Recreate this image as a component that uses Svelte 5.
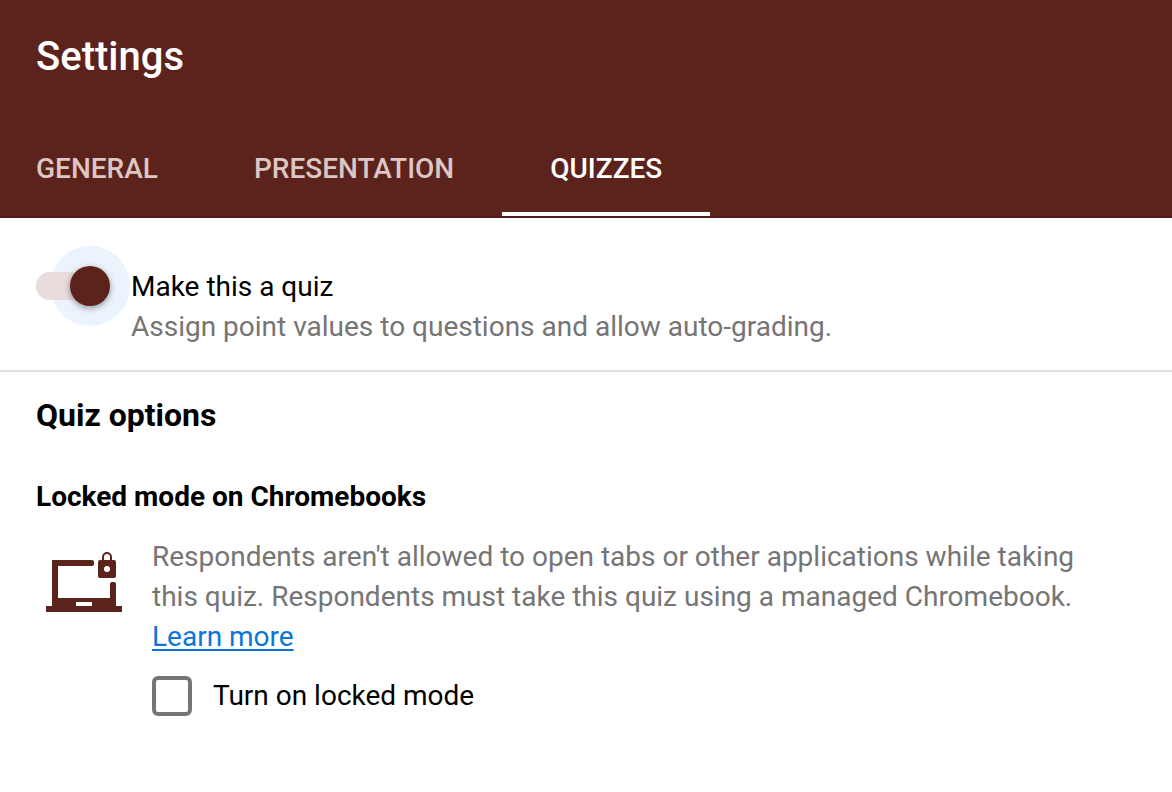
<!--
  Settings dialog, "Quizzes" tab: quiz switch plus the locked mode options.
-->
<script lang="ts">
	type Tab = { id: string; label: string };

	const tabs: Tab[] = [
		{ id: 'general', label: 'GENERAL' },
		{ id: 'presentation', label: 'PRESENTATION' },
		{ id: 'quizzes', label: 'QUIZZES' }
	];

	let active = $state('quizzes');
	let isQuiz = $state(true);
	let lockedMode = $state(false);
</script>

<main class="settings">
	<header class="header">
		<h1 class="title">Settings</h1>
		<div class="tabs" role="tablist" aria-label="Settings">
			{#each tabs as tab (tab.id)}
				<button
					type="button"
					role="tab"
					class="tab"
					class:active={active === tab.id}
					aria-selected={active === tab.id}
					onclick={() => (active = tab.id)}>{tab.label}</button
				>
			{/each}
		</div>
	</header>

	<section class="quiz">
		<span class="switch-wrap" class:on={isQuiz}>
			<input
				id="make-quiz"
				class="switch"
				type="checkbox"
				role="switch"
				aria-describedby="make-quiz-hint"
				bind:checked={isQuiz}
			/>
		</span>
		<div class="quiz-text">
			<label for="make-quiz">Make this a quiz</label>
			<p id="make-quiz-hint" class="muted">
				Assign point values to questions and allow auto-grading.
			</p>
		</div>
	</section>

	<section class="options">
		<h2>Quiz options</h2>
		<h3>Locked mode on Chromebooks</h3>
		<div class="locked">
			<svg class="laptop" viewBox="0 0 76 60" aria-hidden="true">
				<path
					d="M6 8H46Q48 8 48 10V12Q48 14 46 14H12V46H64V32Q64 30 66 30H68Q70 30 70 32V54H76V60H0V54H6ZM30 50V54H46V50Z"
				/>
				<path
					d="M54 8H56V5a5 5 0 0 1 10 0V8H68a2 2 0 0 1 2 2V24a2 2 0 0 1-2 2H54a2 2 0 0 1-2-2V10a2 2 0 0 1 2-2ZM58 8H64V5a3 3 0 0 0-6 0ZM61 14a3 3 0 1 0 0 6a3 3 0 0 0 0-6Z"
				/>
			</svg>
			<div class="locked-text">
				<p class="muted">
					Respondents aren't allowed to open tabs or other applications while taking this quiz.
					Respondents must take this quiz using a managed Chromebook.
					<a href="#learn-more">Learn more</a>
				</p>
				<label class="check">
					<input type="checkbox" bind:checked={lockedMode} />
					<span>Turn on locked mode</span>
				</label>
			</div>
		</div>
	</section>
</main>

<style>
	:global(body) {
		margin: 0;
		background: #fff;
	}
	.settings {
		--brand: #5c231d;
		font: 400 28px/40px Roboto, sans-serif;
		color: #000;
	}
	h1,
	h2,
	h3,
	p {
		margin: 0;
	}
	.muted {
		color: #757575;
	}

	.header {
		background: var(--brand);
		border-bottom: 2px solid #4f1c1b;
	}
	.title {
		padding: 33px 36px 39px;
		font-size: 40px;
		line-height: 48px;
		font-weight: 500;
		color: #fff;
	}
	.tabs {
		display: flex;
	}
	.tab {
		padding: 6px 48px 0;
		height: 96px;
		border: 0;
		border-bottom: 4px solid transparent;
		background: none;
		font: inherit;
		font-weight: 500;
		color: #dcc7c4;
		cursor: pointer;
	}
	.tab:first-child {
		padding-left: 36px;
	}
	.tab.active {
		border-bottom-color: #fff;
		color: #fff;
	}

	.quiz {
		display: flex;
		align-items: flex-start;
		gap: 21px;
		padding: 48px 36px 23px;
		border-bottom: 2px solid #e0e0e0;
	}
	.quiz-text {
		padding-top: 1px;
	}
	.quiz-text label {
		display: block;
	}
	/* halo sits on the wrapper so the track paints over it */
	.switch-wrap {
		position: relative;
		flex: none;
		display: flex;
	}
	.switch-wrap.on::before {
		content: '';
		position: absolute;
		top: -20px;
		right: -20px;
		width: 80px;
		height: 80px;
		border-radius: 50%;
		background: #ebf4fc;
	}
	/* track = ::before, thumb = ::after */
	.switch {
		appearance: none;
		position: relative;
		width: 74px;
		height: 40px;
		margin: 0;
		outline: 0;
	}
	.switch::before {
		content: '';
		position: absolute;
		top: 6px;
		left: 0;
		width: 72px;
		height: 28px;
		border-radius: 14px;
		background: #e8dcdc;
	}
	.switch::after {
		content: '';
		position: absolute;
		top: 0;
		left: 0;
		width: 40px;
		height: 40px;
		border-radius: 50%;
		background: #fafafa;
		box-shadow: 0 2px 6px rgba(0, 0, 0, 0.4);
	}
	.switch:checked::after {
		left: 34px;
		background: var(--brand);
	}

	.options {
		padding: 23px 36px 56px;
	}
	h2 {
		font-size: 32px;
		line-height: 40px;
		font-weight: 700;
	}
	h3 {
		margin: 42px 0 20px;
		font-size: 28px;
		line-height: 40px;
		font-weight: 700;
	}
	.locked {
		display: flex;
		align-items: flex-start;
		gap: 30px;
		padding: 0 48px 0 10px;
	}
	.laptop {
		flex: none;
		width: 76px;
		height: 60px;
		margin-top: 15px;
		fill: var(--brand);
		fill-rule: evenodd;
	}
	.locked-text a {
		display: table;
		color: #0b75da;
		text-underline-offset: 3px;
		text-decoration-thickness: 2px;
	}
	.check {
		display: inline-flex;
		align-items: center;
		gap: 21px;
		margin-top: 19px;
	}
	.check input {
		appearance: none;
		width: 40px;
		height: 40px;
		margin: 0;
		border: 4px solid #757575;
		border-radius: 6px;
		background: #fff;
	}
	.check input:checked {
		border-color: var(--brand);
		background: var(--brand);
	}
</style>
